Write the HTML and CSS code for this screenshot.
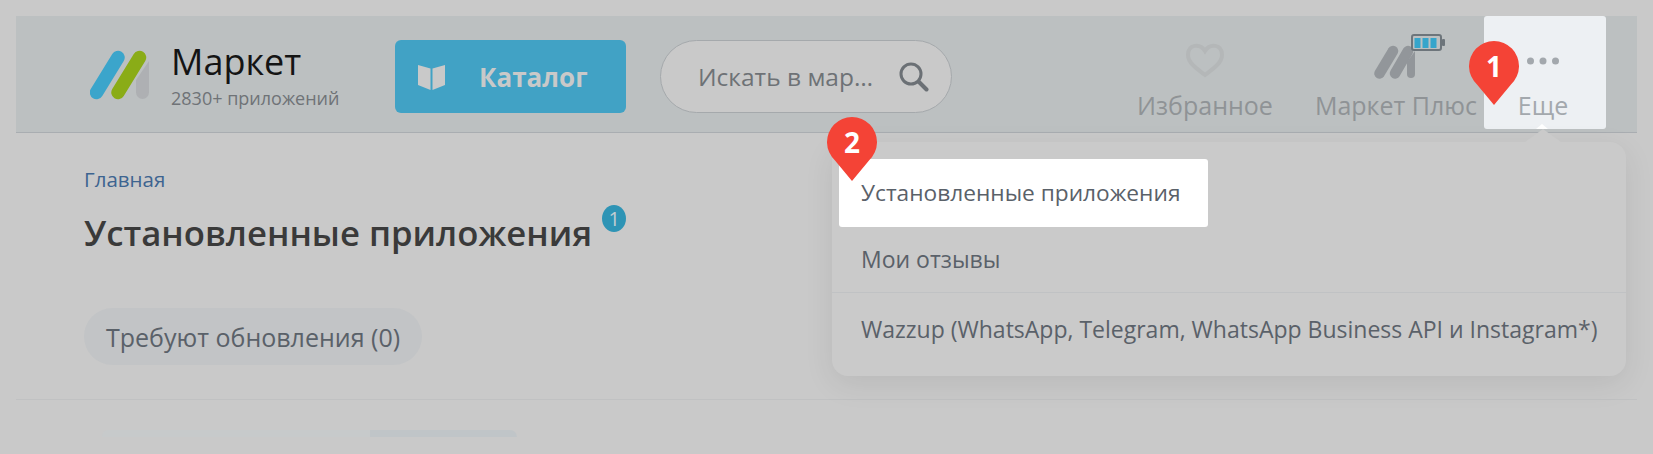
FILE: index.html
```html
<!DOCTYPE html>
<html lang="ru">
<head>
    <meta charset="UTF-8">
    <title>Маркет</title>
    <link rel="stylesheet" href="styles.css">
</head>
<body>

    <div class="page">
        <header class="top-bar">
            <div class="logo">
                <svg class="logo-icon" width="60" height="50" viewBox="0 0 60 50">
                    <line x1="6.500" y1="42.500" x2="28" y2="7.500" stroke="#3ba5cb" stroke-width="13.500" stroke-linecap="round"/>
                    <line x1="28" y1="42.500" x2="49.500" y2="7.500" stroke="#8aac17" stroke-width="13.500" stroke-linecap="round"/>
                    <path d="M59 11V42.500a6.500 6.500 0 0 1-13 0V30Z" fill="#aeb0b3"/>
                </svg>
                <div>
                    <div class="logo-name">Маркет</div>
                    <div class="logo-count">2830+ приложений</div>
                </div>
            </div>

            <button class="catalog-button">
                <svg width="28" height="26" viewBox="0 0 28 26">
                    <path d="M0 1L12.5 4.500V26L0 21Z" fill="#c9c9c9"/>
                    <path d="M14.500 4.500L27 1V21L14.500 26Z" fill="#c9c9c9"/>
                </svg>
                Каталог
            </button>

            <div class="search-box">
                <input type="text" class="search-input" placeholder="Искать в маркете">
                <svg width="30" height="30" viewBox="0 0 30 30">
                    <circle cx="12" cy="12" r="10" fill="none" stroke="#6b7075" stroke-width="3"/>
                    <line x1="20" y1="20" x2="27.500" y2="27.500" stroke="#6b7075" stroke-width="4" stroke-linecap="round"/>
                </svg>
            </div>

            <nav class="nav">
                <a class="nav-item nav-fav">
                    <svg class="nav-icon" width="40" height="60" viewBox="0 0 40 60">
                        <path d="M20 50C12 44 3 38 3 30C3 19 15 18 20 26C25 18 37 19 37 30C37 38 28 44 20 50Z" fill="none" stroke="#b4b7b8" stroke-width="4"/>
                    </svg>
                    <span>Избранное</span>
                </a>
                <a class="nav-item">
                    <svg class="nav-icon nav-icon-plus" width="72" height="60" viewBox="14 0 72 60">
                        <line x1="19.500" y1="48.500" x2="33" y2="26" stroke="#92969a" stroke-width="10.500" stroke-linecap="round"/>
                        <line x1="35" y1="48.500" x2="48" y2="26" stroke="#92969a" stroke-width="10.500" stroke-linecap="round"/>
                        <path d="M55 26V49a4 4 0 0 1-8 0V37Z" fill="#92969a"/>
                        <rect x="52" y="10" width="29" height="15" rx="2" fill="#bcc0c1" stroke="#6d757b" stroke-width="2"/>
                        <rect x="82" y="14" width="3" height="7" rx="1" fill="#6d757b"/>
                        <rect x="54.500" y="13" width="6" height="10" fill="#36a5cb"/>
                        <rect x="62.500" y="13" width="6" height="10" fill="#36a5cb"/>
                        <rect x="70.500" y="13" width="6" height="10" fill="#36a5cb"/>
                    </svg>
                    <span>Маркет Плюс</span>
                </a>
                <a class="nav-item nav-more">
                    <svg class="nav-icon" width="40" height="60" viewBox="0 0 40 60">
                        <circle cx="7.500" cy="36" r="3.500" fill="#a3a8ad"/>
                        <circle cx="20" cy="36" r="3.500" fill="#a3a8ad"/>
                        <circle cx="32.500" cy="36" r="3.500" fill="#a3a8ad"/>
                    </svg>
                    <span>Еще</span>
                </a>
            </nav>
        </header>

        <main class="content">
            <a class="crumb">Главная</a>
            <h1 class="title">Установленные приложения <span class="title-badge">1</span></h1>
            <div class="pill">Требуют обновления (0)</div>
        </main>

        <div class="divider"></div>

        <div class="skeleton">
            <div class="skeleton-name"></div>
            <div class="skeleton-tag"></div>
        </div>
    </div>

    <div class="menu">
        <a class="menu-item menu-item-active">Установленные приложения</a>
        <a class="menu-item">Мои отзывы</a>
        <div class="menu-line"></div>
        <a class="menu-item">Wazzup (WhatsApp, Telegram, WhatsApp Business API и Instagram*)</a>
    </div>

    <div class="marker marker-one">
        <svg width="50" height="64" viewBox="0 0 50 64"><path d="M25 64L8 43.400A25 25 0 1 1 42 43.400Z" fill="#f44336"/></svg>
        <span>1</span>
    </div>
    <div class="marker marker-two">
        <svg width="50" height="64" viewBox="0 0 50 64"><path d="M25 64L8 43.400A25 25 0 1 1 42 43.400Z" fill="#f44336"/></svg>
        <span>2</span>
    </div>

</body>
</html>
```

FILE: styles.css
```css
html, body {
    height: 100%;
}
body {
    background: #c9c9c9;
    color: #5a6169;
    font-family: "Open Sans", Arial, sans-serif;
    margin: 0;
    overflow: hidden;
    position: relative;
}
.page {
    padding: 16px 16px 0;
}
.top-bar {
    display: flex;
    align-items: flex-start;
    height: 116px;
    padding-right: 31px;
    background: #bcc0c1;
    border-bottom: 1px solid #a9adb1;
}
.logo {
    display: flex;
    margin-left: 74px;
    width: 305px;
}
.logo-icon {
    margin-top: 34px;
    margin-right: 21px;
}
.logo-name {
    color: #141414;
    font-size: 36px;
    font-weight: 500;
    line-height: 48px;
    margin-top: 22px;
}
.logo-count {
    color: #6f7377;
    font-size: 18px;
    line-height: 24px;
}
.catalog-button {
    display: flex;
    align-items: center;
    gap: 33px;
    width: 231px;
    height: 73px;
    margin-top: 24px;
    padding: 0 0 0 23px;
    background: #41a2c5;
    color: #c9c9c9;
    border: none;
    border-radius: 6px;
    font-family: inherit;
    font-size: 26px;
    font-weight: 700;
}
.search-box {
    display: flex;
    align-items: center;
    box-sizing: border-box;
    width: 292px;
    height: 73px;
    margin-top: 24px;
    margin-left: 34px;
    padding-left: 37px;
    background: #c9c9c9;
    border: 1px solid #a5a9ac;
    border-radius: 37px;
}
.search-input {
    width: 180px;
    padding: 0;
    margin-right: 21px;
    background: none;
    border: none;
    font-family: inherit;
    font-size: 24.5px;
    text-overflow: ellipsis;
}
.search-input::placeholder {
    color: #6e7276;
    opacity: 1;
}
.nav {
    display: flex;
    margin-left: auto;
}
.nav-item {
    display: flex;
    flex-direction: column;
    align-items: center;
    color: #8f9396;
    font-size: 25px;
    line-height: 32px;
}
.nav-fav {
    margin-right: 42px;
}
.nav-icon {
    margin-top: 9px;
    margin-bottom: 4px;
}
.nav-icon-plus {
    align-self: flex-start;
    margin-left: 59px;
}
.nav-more {
    position: relative;
    box-sizing: border-box;
    width: 122px;
    height: 113px;
    margin-left: 7px;
    padding-right: 4px;
    background: #edf0f3;
    color: #a3a8ad;
    border-radius: 3px;
}
.nav-more::after {
    content: "";
    position: absolute;
    left: 52px;
    bottom: 0;
    border-left: 6px solid transparent;
    border-right: 6px solid transparent;
    border-bottom: 5px solid #fff;
}
.content {
    padding-left: 68px;
}
.crumb {
    display: block;
    margin-top: 32px;
    color: #3d6490;
    font-size: 20.5px;
    line-height: 28px;
}
.title {
    margin: 18px 0 0;
    color: #3a3a3a;
    font-size: 34.7px;
    font-weight: 600;
    line-height: 44px;
}
.title-badge {
    position: relative;
    top: -6px;
    display: inline-block;
    width: 24px;
    height: 27px;
    margin-left: 1px;
    background: #2e94b5;
    color: #c2cdd2;
    border-radius: 50%;
    font-size: 20px;
    font-weight: 400;
    line-height: 27px;
    text-align: center;
    vertical-align: 14px;
}
.pill {
    width: fit-content;
    margin-top: 53px;
    padding: 0 22px;
    height: 57px;
    background: #c2c4c6;
    border-radius: 29px;
    font-size: 25px;
    line-height: 59px;
}
.divider {
    height: 1px;
    margin-top: 34px;
    background: #c0c1c2;
}
.skeleton {
    display: flex;
    height: 7px;
    margin: 30px 0 0 86px;
}
.skeleton-name {
    width: 268px;
    background: #c7cacb;
    border-radius: 6px 0 0 0;
}
.skeleton-tag {
    width: 147px;
    background: #c0c5c8;
    border-radius: 0 8px 0 0;
}
.menu {
    position: absolute;
    left: 832px;
    top: 142px;
    box-sizing: border-box;
    width: 794px;
    height: 234px;
    padding-top: 17px;
    background: #cacaca;
    border-radius: 16px;
    box-shadow: 0 8px 30px rgba(0, 0, 0, 0.08);
}
.menu::before {
    content: "";
    position: absolute;
    left: 693px;
    top: -13px;
    border-left: 18px solid transparent;
    border-right: 18px solid transparent;
    border-bottom: 13px solid #cacaca;
}
.menu-item {
    display: block;
    padding-left: 29px;
    font-size: 23px;
    line-height: 64px;
}
.menu-item-active {
    width: fit-content;
    margin-left: 7px;
    padding: 2px 28px 2px 22px;
    background: #fff;
    border-radius: 3px;
    font-size: 22.7px;
}
.menu-line {
    height: 1px;
    margin-top: 1px;
    margin-bottom: 4px;
    background: #c0c2c4;
}
.marker {
    position: absolute;
    width: 50px;
    height: 64px;
    color: #fff;
    font-size: 28px;
    font-weight: 700;
    line-height: 50px;
    text-align: center;
}
.marker svg {
    display: block;
}
.marker span {
    position: absolute;
    left: 0;
    right: 0;
    top: 0;
}
.marker-one {
    left: 1469px;
    top: 41px;
}
.marker-two {
    left: 827px;
    top: 117px;
}
```
